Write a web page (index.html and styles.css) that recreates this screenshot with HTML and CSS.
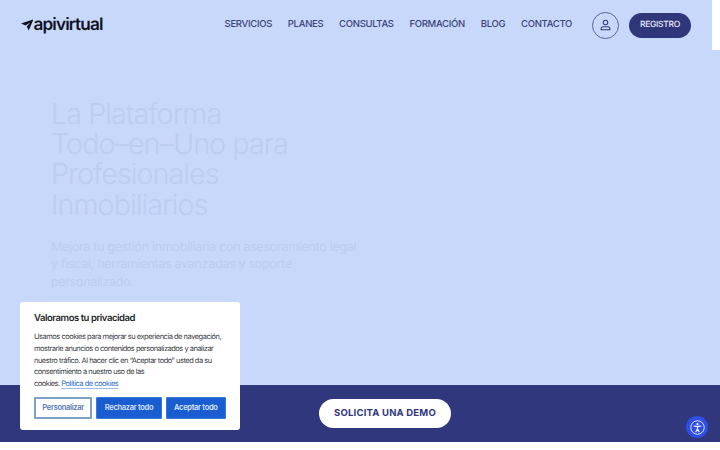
FILE: index.html
```html
<!DOCTYPE html>
<html lang="es">
<head>
<meta charset="utf-8">
<title>apivirtual</title>
<link rel="stylesheet" href="styles.css">
</head>
<body>
<div class="page">
  <div class="main">
    <header class="header">
      <a class="logo" href="#">
        <svg class="logo-mark" viewBox="0 0 13.2 12.2" width="12.4" height="12"><path d="M0 4.4 13.2.2 8.2 12 6.2 7.6 9.8 3.4 4.8 6.6Z" fill="#10131f"/></svg>
        <span class="logo-text">apivirtual</span>
      </a>
      <nav class="nav">
        <a href="#">SERVICIOS</a>
        <a href="#">PLANES</a>
        <a href="#">CONSULTAS</a>
        <a href="#">FORMACIÓN</a>
        <a href="#">BLOG</a>
        <a href="#">CONTACTO</a>
      </nav>
      <a class="user" href="#" aria-label="Usuario">
        <svg viewBox="0 0 12 12" width="11" height="12" fill="none" stroke="#2f3679" stroke-width="1.1"><circle cx="6" cy="3.3" r="2.5"/><path d="M1.2 11.2V10a2.2 2.2 0 0 1 2.2-2.2h5.2A2.2 2.2 0 0 1 10.8 10v1.2Z" stroke-linejoin="round"/></svg>
      </a>
      <a class="register" href="#">REGISTRO</a>
    </header>
    <section class="hero">
      <h1>La Plataforma Todo–en–Uno para Profesionales Inmobiliarios</h1>
      <p>Mejora tu gestión inmobiliaria con asesoramiento legal y fiscal, herramientas avanzadas y soporte personalizado.</p>
    </section>
    <section class="banner">
      <a class="demo" href="#">SOLICITA UNA DEMO</a>
    </section>
  </div>
  <div class="corner"></div>
  <aside class="cookie">
    <h2>Valoramos tu privacidad</h2>
    <p>Usamos cookies para mejorar su experiencia de navegación, mostrarle anuncios o contenidos personalizados y analizar nuestro tráfico. Al hacer clic en “Aceptar todo” usted da su consentimiento a nuestro uso de las<br>cookies. <a href="#">Política de cookies</a></p>
    <div class="cookie-actions">
      <button class="btn btn-outline">Personalizar</button>
      <button class="btn btn-fill btn-reject">Rechazar todo</button>
      <button class="btn btn-fill btn-accept">Aceptar todo</button>
    </div>
  </aside>
  <button class="a11y" aria-label="Accesibilidad">
    <svg viewBox="0 0 16 16" width="15" height="15" fill="none" stroke="#fff"><circle cx="8" cy="8" r="7.2" stroke-width=".9"/><circle cx="8" cy="4.4" r="1.2" fill="#fff" stroke="none"/><path d="M4.3 6.4 8 7.1l3.7-.7M8 7.1v2.4M8 9.5l-1.7 3M8 9.5l1.7 3" stroke-width="1.2" stroke-linecap="round"/></svg>
  </button>
</div>
</body>
</html>
```
FILE: styles.css
```css
* { box-sizing: border-box; }
html, body { margin: 0; padding: 0; background: #fff; }
body { width: 720px; height: 450px; overflow: hidden; font-family: Inter, "Liberation Sans", sans-serif; text-rendering: geometricPrecision; }
a { text-decoration: none; color: inherit; }
.page { position: relative; width: 720px; height: 450px; }
.main { height: 442px; display: flex; flex-direction: column; background: #c7d8fb; }
.header { height: 50px; flex: none; display: flex; align-items: center; padding: 0 29px 0 21px; }
.logo { display: flex; align-items: center; color: #10131f; margin-right: auto; }
.logo-mark { display: block; }
.logo-text { font-size: 17.2px; font-weight: 600; letter-spacing: -.85px; line-height: 20px; }
.nav { display: flex; gap: 15.8px; font-size: 9.5px; font-weight: 500; color: #3c4479; line-height: 14px; letter-spacing: -.3px; }
.user { width: 27px; height: 27px; margin-left: 20px; border: 1px solid #5a6495; border-radius: 50%; display: flex; align-items: center; justify-content: center; }
.register { width: 62px; height: 25px; margin-left: 10px; border-radius: 13px; background: #2f3679; color: #e8ecfb; font-size: 8.5px; font-weight: 500; letter-spacing: -.3px; display: flex; align-items: center; justify-content: center; }
.hero { flex: 1; padding: 49px 0 0 51px; color: #bccdf1; }
.hero h1 { margin: 0; width: 250px; font-size: 28.8px; font-weight: 300; line-height: 30.2px; letter-spacing: -1px; }
.hero p { margin: 19px 0 0; width: 312px; font-size: 12.5px; line-height: 17.5px; font-weight: 400; letter-spacing: -.3px; }
.banner { height: 57px; flex: none; background: #30377c; display: flex; align-items: center; justify-content: center; padding-left: 50px; }
.demo { width: 132px; height: 29px; border-radius: 15px; background: #fff; color: #30377c; font-size: 9.5px; font-weight: 700; letter-spacing: .2px; display: flex; align-items: center; justify-content: center; }
.corner { position: absolute; top: 0; right: 0; width: 8px; height: 50px; background: #fff; }
.cookie { position: absolute; left: 20px; top: 302px; width: 220px; height: 128px; padding: 10px 14px 0; background: #fff; border-radius: 3px; }
.cookie h2 { margin: 0; font-size: 9.5px; line-height: 13px; font-weight: 600; color: #1c1f26; letter-spacing: -.45px; }
.cookie p { margin: 6px 0 0; font-size: 7.5px; line-height: 11.8px; color: #3e4147; letter-spacing: -.5px; }
.cookie p a { color: #2f6fd0; border-bottom: 1px solid #9dbbe8; }
.cookie-actions { display: flex; gap: 4px; margin-top: 7px; }
.btn { height: 22px; padding: 0; border-radius: 1px; font-family: inherit; font-size: 7.5px; letter-spacing: -.3px; font-weight: 600; display: block; }
.btn-outline { width: 59px; background: #fff; border: 2px solid #7ea0c7; color: #5577b0; }
.btn-fill { background: #1a5dd0; border: 1px solid #3c78db; color: #dbe6fa; }
.btn-reject { width: 66px; }
.btn-accept { width: 61px; }
.a11y { position: absolute; left: 686px; top: 416px; width: 22px; height: 22px; padding: 0; border: 0; border-radius: 50%; background: #2f4fe6; display: flex; align-items: center; justify-content: center; }
```
